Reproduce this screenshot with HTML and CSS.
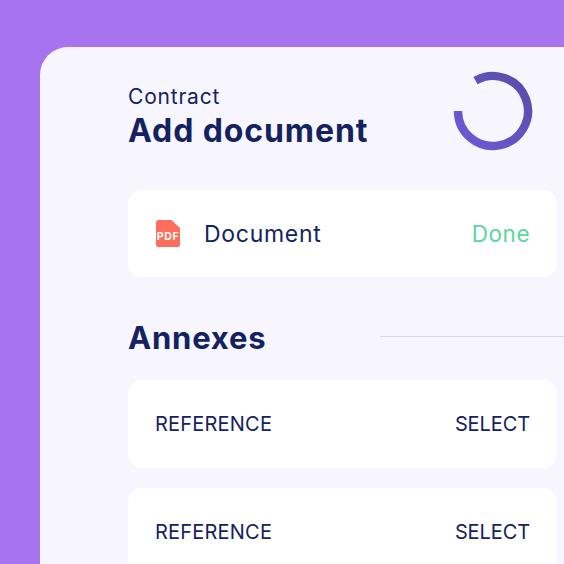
FILE: index.html
```html
<!DOCTYPE html>
<html lang="en">
<head>
<meta charset="utf-8">
<title>Add document</title>
<link rel="stylesheet" href="styles.css">
</head>
<body>
<main class="sheet">
  <header class="head">
    <div class="titles">
      <p class="eyebrow">Contract</p>
      <h1 class="title">Add document</h1>
    </div>
    <svg class="ring" width="80" height="80" viewBox="0 0 80 80" aria-hidden="true">
      <defs>
        <linearGradient id="ringGrad" x1="1" y1="0" x2="0" y2="1">
          <stop offset="0" stop-color="#584ca8"/>
          <stop offset="1" stop-color="#6c5ad6"/>
        </linearGradient>
      </defs>
      <path d="M22.5 9.7A35 35 0 1 1 5 40" fill="none" stroke="url(#ringGrad)" stroke-width="8.4"/>
    </svg>
  </header>

  <section class="row row-doc">
    <div class="doc">
      <svg class="pdf" width="24" height="27" viewBox="0 0 24 27" aria-hidden="true">
        <path d="M2.5 0H15.5L24 8V24.5A2.5 2.5 0 0 1 21.5 27H2.5A2.5 2.5 0 0 1 0 24.5V2.5A2.5 2.5 0 0 1 2.5 0Z" fill="#fd6f5b"/>
        <text class="pdf-text" x="12" y="20" text-anchor="middle">PDF</text>
      </svg>
      <span class="doc-name">Document</span>
    </div>
    <span class="done">Done</span>
  </section>

  <div class="section-head">
    <h2 class="section-title">Annexes</h2>
    <div class="rule"></div>
  </div>

  <section class="row row-annex">
    <span class="label">REFERENCE</span>
    <span class="label label-action">SELECT</span>
  </section>
  <section class="row row-annex">
    <span class="label">REFERENCE</span>
    <span class="label label-action">SELECT</span>
  </section>
</main>
</body>
</html>
```

FILE: styles.css
```css
* { box-sizing: border-box; }
html, body { margin: 0; height: 100%; overflow: hidden; }
body {
  background: #a873ef;
  font-family: "Inter", "Open Sans", sans-serif;
  color: #14235f;
  padding: 47px 0 0 40px;
}
.sheet {
  width: 524px;
  height: 517px;
  background: #f7f6fe;
  border-radius: 28px 0 0 0;
  padding: 25px 7px 0 88px;
  overflow: hidden;
}
.head {
  display: flex;
  justify-content: space-between;
  align-items: flex-start;
  height: 118px;
  padding-right: 24px;
}
.titles { padding-top: 13px; }
.eyebrow { margin: 0; font-size: 21px; line-height: 24px; letter-spacing: .8px; }
.title { margin: 4px 0 0; font-size: 32px; line-height: 36px; font-weight: 700; letter-spacing: .9px; }
.ring { display: block; margin-top: -1px; }
.row {
  display: flex;
  justify-content: space-between;
  align-items: center;
  background: #fff;
  border-radius: 14px;
  padding: 0 27px 0 27px;
}
.row-doc { height: 87px; }
.row-annex { height: 88px; margin-bottom: 20px; }
.doc { display: flex; align-items: center; gap: 24px; }
.pdf { display: block; margin-left: 1px; }
.pdf-text { font-size: 10.5px; font-weight: 700; fill: #fff; letter-spacing: .6px; font-family: "Inter", sans-serif; }
.doc-name { font-size: 23px; letter-spacing: .7px; }
.done { font-size: 22.5px; letter-spacing: .5px; color: #5cd5a0; }
.label { font-size: 20px; letter-spacing: .2px; }
.label-action { letter-spacing: -.1px; }
.section-head {
  display: flex;
  align-items: center;
  height: 103px;
  margin-right: -7px;
}
.section-title { margin: 17px 0 0; font-size: 31px; font-weight: 700; letter-spacing: .8px; flex: none; width: 252px; }
.rule { flex: 1; height: 1px; background: #dcdbe4; margin-top: 15px; }
```
